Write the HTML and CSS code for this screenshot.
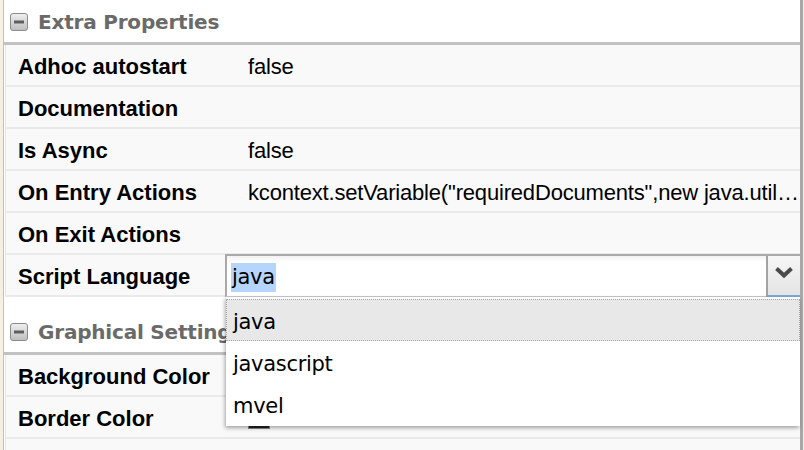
FILE: index.html
```html
<!DOCTYPE html>
<html>
<head>
<meta charset="utf-8">
<link rel="stylesheet" href="styles.css">
</head>
<body>
<div class="panel">
  <section class="group">
    <div class="group-head">
      <svg class="toggle" width="18" height="18" viewBox="0 0 18 18"><defs><linearGradient id="g1" x1="0" y1="0" x2="0" y2="1"><stop offset="0" stop-color="#f0f0f0"/><stop offset="1" stop-color="#bdbdbd"/></linearGradient></defs><rect x="0.5" y="0.5" width="17" height="17" rx="2.5" fill="url(#g1)" stroke="#8c8c8c"/><rect x="4" y="7.5" width="10" height="3" fill="#5e5e5e"/></svg>
      <span>Extra Properties</span>
    </div>
    <div class="row"><div class="label">Adhoc autostart</div><div class="value">false</div></div>
    <div class="row"><div class="label">Documentation</div><div class="value"></div></div>
    <div class="row"><div class="label">Is Async</div><div class="value">false</div></div>
    <div class="row"><div class="label">On Entry Actions</div><div class="value">kcontext.setVariable("requiredDocuments",new java.util.ArrayList());</div></div>
    <div class="row"><div class="label">On Exit Actions</div><div class="value"></div></div>
    <div class="row row-edit">
      <div class="label">Script Language</div><div class="value"></div>
      <div class="combo">
        <div class="combo-input"><span class="sel">java</span></div>
        <div class="combo-btn"><svg width="20" height="13" viewBox="0 0 20 13"><path d="M2.5 2.5 L10 9.5 L17.5 2.5" fill="none" stroke="#4a4a4a" stroke-width="4"/></svg></div>
      </div>
      <ul class="combo-list">
        <li class="item active">java</li>
        <li class="item">javascript</li>
        <li class="item">mvel</li>
      </ul>
    </div>
  </section>
  <section class="group">
    <div class="group-head">
      <svg class="toggle" width="18" height="18" viewBox="0 0 18 18"><defs><linearGradient id="g2" x1="0" y1="0" x2="0" y2="1"><stop offset="0" stop-color="#f0f0f0"/><stop offset="1" stop-color="#bdbdbd"/></linearGradient></defs><rect x="0.5" y="0.5" width="17" height="17" rx="2.5" fill="url(#g2)" stroke="#8c8c8c"/><rect x="4" y="7.5" width="10" height="3" fill="#5e5e5e"/></svg>
      <span>Graphical Settings</span>
    </div>
    <div class="row"><div class="label">Background Color</div><div class="value"></div></div>
    <div class="row"><div class="label">Border Color</div><div class="value"><span class="swatch"></span></div></div>
    <div class="row"><div class="label">Font Color</div><div class="value"></div></div>
  </section>
</div>
</body>
</html>
```
FILE: styles.css
```css
html, body {
  margin: 0;
  padding: 0;
  height: 100%;
  overflow: hidden;
}
body {
  background: #f4f1e4;
}
.panel {
  margin-left: 3px;
  margin-top: -13px;
  border-left: 1px solid #c2c2c2;
  border-right: 3px solid #a8a8a8;
  background: #fff;
  width: 796px;
  min-height: 600px;
}
.group-head {
  display: flex;
  align-items: center;
  padding: 14px 0 0 6px;
  border-bottom: 3px solid #c2c2c2;
  height: 41px;
  font-family: "DejaVu Sans", Verdana, sans-serif;
  font-weight: bold;
  font-size: 20px;
  color: #6a6a6a;
  letter-spacing: -0.2px;
}
.toggle {
  margin-right: 10px;
  flex: none;
}
.row {
  position: relative;
  display: flex;
  height: 36px;
  padding-top: 4px;
  align-items: center;
  margin-left: 1px;
  border-left: 1px solid #e6e6e6;
  border-bottom: 2px solid #eaeaea;
  background: #f9f9f9;
  font-family: "Liberation Sans", Arial, sans-serif;
  font-size: 22px;
  color: #000;
}
.label {
  flex: none;
  width: 218px;
  padding-left: 12px;
  font-weight: bold;
}
.value {
  flex: 1;
  min-width: 0;
  padding-left: 12px;
  padding-right: 1px;
  white-space: nowrap;
  overflow: hidden;
  text-overflow: ellipsis;
  letter-spacing: -0.18px;
}
.swatch {
  display: block;
  width: 20px;
  height: 16px;
  margin-top: 2px;
  background: #222;
  border: 1px solid #888;
}
.combo {
  position: absolute;
  left: 219px;
  right: 0;
  top: -1px;
  height: 43px;
  box-sizing: border-box;
  display: flex;
  border-top: 2px solid #a9a9a9;
  border-left: 2px solid #a9a9a9;
  border-bottom: 1px solid #c8c8c8;
  background: #fff;
  z-index: 2;
}
.combo-input {
  flex: 1;
  display: flex;
  align-items: center;
  padding-left: 4px;
  padding-top: 2px;
  background: linear-gradient(#f2f2f2, #fff 6px);
  font-family: "DejaVu Sans", Verdana, sans-serif;
  font-size: 21px;
}
.sel {
  background: #b5d5fd;
  line-height: 29px;
  padding: 0 1px;
  letter-spacing: -0.3px;
}
.combo-btn {
  flex: none;
  width: 32px;
  border-left: 2px solid #a2a2a2;
  border-bottom: 2px solid #7ea8dc;
  margin-bottom: -1px;
  background: linear-gradient(#f6f6f6, #e4e4e4);
  display: flex;
  align-items: center;
  justify-content: center;
  padding-bottom: 6px;
}
.combo-list {
  position: absolute;
  left: 220px;
  right: 0;
  top: 42px;
  height: 129px;
  box-sizing: border-box;
  margin: 0;
  padding: 2px 0 0 0;
  list-style: none;
  background: #fff;
  box-shadow: -1px 2px 4px rgba(0, 0, 0, 0.35);
  z-index: 3;
  font-family: "DejaVu Sans", Verdana, sans-serif;
  font-size: 21px;
  color: #000;
}
.item {
  height: 42px;
  box-sizing: border-box;
  display: flex;
  align-items: center;
  padding-left: 6px;
  padding-top: 4px;
  letter-spacing: -0.3px;
  border: 1px solid transparent;
}
.item.active {
  background: #e8e8e8;
  border: 1px dotted #a8a8a8;
}
```
